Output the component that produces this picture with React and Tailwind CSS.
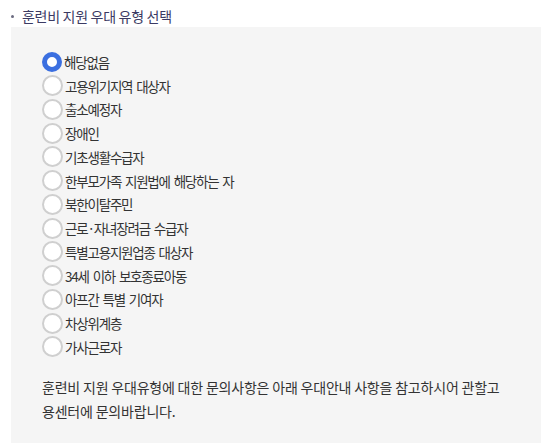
import React, { useState } from 'react';

const options = [
  '해당없음',
  '고용위기지역 대상자',
  '출소예정자',
  '장애인',
  '기초생활수급자',
  '한부모가족 지원법에 해당하는 자',
  '북한이탈주민',
  '근로·자녀장려금 수급자',
  '특별고용지원업종 대상자',
  '34세 이하 보호종료아동',
  '아프간 특별 기여자',
  '차상위계층',
  '가사근로자',
];

export default function App() {
  const [selected, setSelected] = useState(0);

  return (
    <main
      className="min-h-screen bg-white pt-[5px]"
      style={{ fontFamily: '"Noto Sans CJK KR", "Noto Sans", sans-serif' }}
    >
      <h2 className="ml-[11px] flex h-[22px] items-center text-[14px] font-normal tracking-[-0.3px] text-[#3b3a63]">
        <span className="mr-[8px] h-[3px] w-[3px] rounded-full bg-[#6b6b80]" />
        훈련비 지원 우대 유형 선택
      </h2>

      <section className="ml-[11px] w-[530px] bg-[#f5f5f5] pb-[20px] pl-[31px] pr-[20px] pt-[23px]">
        <ul>
          {options.map((label, i) => (
            <li key={label} className="flex h-[23.75px] items-center">
              <label className="flex cursor-pointer items-center gap-[2px]">
                <input
                  type="radio"
                  name="prefType"
                  checked={selected === i}
                  onChange={() => setSelected(i)}
                  className="sr-only"
                />
                {selected === i ? (
                  <span className="box-border h-[20px] w-[20px] rounded-full border-[5.5px] border-[#3b6fe0] bg-white" />
                ) : (
                  <span className="box-border h-[21px] w-[21px] rounded-full border-2 border-[#cfcfcf] bg-white" />
                )}
                <span className="text-[13.5px] leading-[20px] tracking-[-1.2px] text-[#333] [word-spacing:2px]">
                  {label}
                </span>
              </label>
            </li>
          ))}
        </ul>

        <p className="mt-[16px] whitespace-nowrap text-[14px] leading-[24px] tracking-[-0.2px] text-[#333]">
          훈련비 지원 우대유형에 대한 문의사항은 아래 우대안내 사항을 참고하시어 관할고
          <br />
          용센터에 문의바랍니다.
        </p>
      </section>
    </main>
  );
}
